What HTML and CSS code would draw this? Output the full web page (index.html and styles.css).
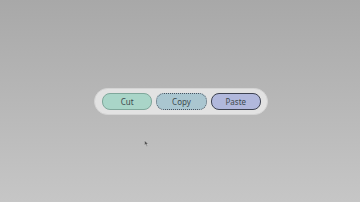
FILE: index.html
```html
<!DOCTYPE html>
<html lang="en">
<head>
    <meta charset="UTF-8">
    <meta name="viewport" content="width=device-width, initial-scale=1.0">
    <title>Clipboard</title>
    <link rel="stylesheet" href="styles.css">
</head>
<body>
    <div class="toolbar">
        <button class="btn cut">Cut</button>
        <button class="btn copy">Copy</button>
        <button class="btn paste">Paste</button>
    </div>
    <svg class="cursor" width="5" height="7" viewBox="0 0 5 7">
        <path d="M0.5 0.5 L0.5 5.5 L1.8 4.3 L2.8 6.5 L3.6 6.1 L2.7 4 L4.3 4 Z" fill="#555" stroke="#ddd" stroke-width="0.4"/>
    </svg>
</body>
</html>
```

FILE: styles.css
```css
html, body {
    height: 100%;
}
body {
    margin: 0;
    font-family: "Noto Sans", Arial, sans-serif;
    background: linear-gradient(180deg, #a8a8a8, #c6c6c6);
    display: flex;
    justify-content: center;
    align-items: center;
    position: relative;
    overflow: hidden;
}
.toolbar {
    width: 174px;
    height: 27px;
    margin-left: 2px;
    box-sizing: border-box;
    display: flex;
    align-items: center;
    gap: 4px;
    padding: 0 6px 0 7px;
    background: #e2e2e2;
    border: 1px solid #d4d4d4;
    border-radius: 14px;
}
.btn {
    width: 51px;
    height: 17px;
    box-sizing: border-box;
    border-radius: 8px;
    font-family: inherit;
    font-size: 8px;
    color: #3d4a4f;
    padding: 0;
    cursor: pointer;
}
.cut {
    background: #a9d5c8;
    border: 1px solid #7fa79b;
}
.copy {
    background: #aac6d0;
    border: 1.2px dotted #4a5460;
}
.paste {
    background: #b1b8dc;
    border: 1.5px solid #3e4352;
}
.cursor {
    position: absolute;
    left: 144px;
    top: 140px;
}
```
